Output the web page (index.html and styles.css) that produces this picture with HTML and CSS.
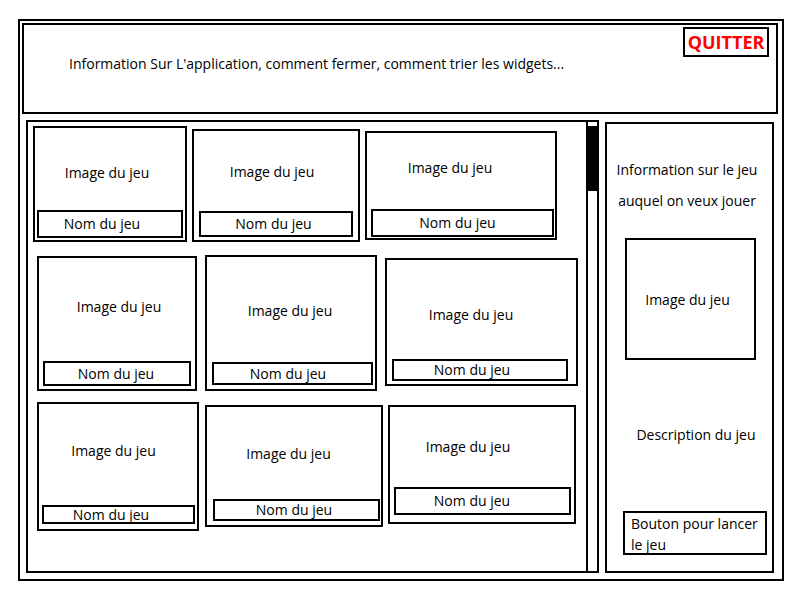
FILE: index.html
```html
<!DOCTYPE html>
<html lang="fr">
<head>
<meta charset="utf-8">
<title>Maquette</title>
<link rel="stylesheet" href="styles.css">
</head>
<body>
<div class="frame">
  <header class="header">
    <p class="header-info">Information Sur L'application, comment fermer, comment trier les widgets...</p>
    <button class="quit">QUITTER</button>
  </header>
  <div class="main">
    <section class="games">
      <div class="row">
        <div class="card c1"><div class="card-img"><span>Image du jeu</span></div><div class="card-name"><span>Nom du jeu</span></div></div>
        <div class="card c2"><div class="card-img"><span>Image du jeu</span></div><div class="card-name"><span>Nom du jeu</span></div></div>
        <div class="card c3"><div class="card-img"><span>Image du jeu</span></div><div class="card-name"><span>Nom du jeu</span></div></div>
      </div>
      <div class="row">
        <div class="card c4"><div class="card-img"><span>Image du jeu</span></div><div class="card-name"><span>Nom du jeu</span></div></div>
        <div class="card c5"><div class="card-img"><span>Image du jeu</span></div><div class="card-name"><span>Nom du jeu</span></div></div>
        <div class="card c6"><div class="card-img"><span>Image du jeu</span></div><div class="card-name"><span>Nom du jeu</span></div></div>
      </div>
      <div class="row">
        <div class="card c7"><div class="card-img"><span>Image du jeu</span></div><div class="card-name"><span>Nom du jeu</span></div></div>
        <div class="card c8"><div class="card-img"><span>Image du jeu</span></div><div class="card-name"><span>Nom du jeu</span></div></div>
        <div class="card c9"><div class="card-img"><span>Image du jeu</span></div><div class="card-name"><span>Nom du jeu</span></div></div>
      </div>
    </section>
    <div class="scrollbar"><div class="thumb"></div></div>
    <aside class="details">
      <p class="details-info">Information sur le jeu<br>auquel on veux jouer</p>
      <div class="details-img">Image du jeu</div>
      <p class="details-desc">Description du jeu</p>
      <button class="launch">Bouton pour lancer<br>le jeu</button>
    </aside>
  </div>
</div>
</body>
</html>
```

FILE: styles.css
```css
* { box-sizing: border-box; }

html, body {
  margin: 0;
  padding: 0;
  background: #fff;
}

body {
  font-family: "Open Sans", "Noto Sans", sans-serif;
  font-size: 14px;
  color: #000;
  width: 800px;
  height: 600px;
  padding: 19px 0 0 18px;
}

.frame {
  width: 766px;
  height: 562px;
  border: 2px solid #000;
  padding: 2px 6px 6px 2px;
  display: flex;
  flex-direction: column;
}

.header {
  width: 756px;
  height: 91px;
  border: 2px solid #000;
  display: flex;
  align-items: flex-start;
  justify-content: space-between;
}

.header-info {
  margin: 29px 0 0 45px;
  line-height: 20px;
}

.quit {
  margin: 2px 7px 0 0;
  width: 86px;
  height: 30px;
  border: 2px solid #000;
  background: #fff;
  color: #ff0000;
  font-family: "Open Sans", sans-serif;
  font-weight: bold;
  font-size: 18px;
  line-height: 24px;
  padding: 0;
}

.main {
  display: flex;
  align-items: flex-start;
  margin: 6px 0 0 4px;
}

.games {
  width: 562px;
  height: 453px;
  border: 2px solid #000;
}

.row {
  display: flex;
  align-items: flex-start;
}

.card {
  width: var(--w);
  height: var(--h);
  margin: var(--mt) 0 0 var(--ml);
  border: 2px solid #000;
  display: flex;
  flex-direction: column;
}

.card-img {
  flex: 1;
  display: flex;
  align-items: center;
  justify-content: center;
  line-height: 18px;
}

.card-img span {
  margin: var(--iy) 0 0 var(--ix);
}

.card-name {
  height: var(--nh);
  margin: 0 var(--nr) var(--nb) var(--nl);
  border: 2px solid #000;
  display: flex;
  align-items: center;
  justify-content: center;
  line-height: 18px;
}

.card-name span {
  margin-left: var(--nx);
}

.c1 { --w: 154px; --h: 116px; --mt: 4px;  --ml: 5px; --ix: -6px;  --iy: 8px;  --nh: 28px; --nl: 2px; --nr: 2px; --nb: 2px; --nx: -16px; }
.c2 { --w: 168px; --h: 113px; --mt: 7px;  --ml: 5px; --ix: -8px;  --iy: 2px;  --nh: 26px; --nl: 5px; --nr: 5px; --nb: 3px; --nx: -5px; }
.c3 { --w: 192px; --h: 109px; --mt: 9px;  --ml: 5px; --ix: -22px; --iy: -6px; --nh: 28px; --nl: 4px; --nr: 1px; --nb: 1px; --nx: -10px; }
.c4 { --w: 160px; --h: 135px; --mt: 14px; --ml: 9px; --ix: 4px;   --iy: -5px; --nh: 25px; --nl: 4px; --nr: 4px; --nb: 3px; --nx: -2px; }
.c5 { --w: 172px; --h: 136px; --mt: 13px; --ml: 8px; --ix: -2px;  --iy: 3px;  --nh: 23px; --nl: 5px; --nr: 2px; --nb: 4px; --nx: -9px; }
.c6 { --w: 193px; --h: 128px; --mt: 16px; --ml: 8px; --ix: -21px; --iy: 11px; --nh: 22px; --nl: 5px; --nr: 8px; --nb: 3px; --nx: -16px; }
.c7 { --w: 162px; --h: 129px; --mt: 11px; --ml: 9px; --ix: -9px;  --iy: -7px; --nh: 19px; --nl: 3px; --nr: 2px; --nb: 5px; --nx: -15px; }
.c8 { --w: 178px; --h: 122px; --mt: 14px; --ml: 6px; --ix: -11px; --iy: 2px;  --nh: 22px; --nl: 6px; --nr: 1px; --nb: 4px; --nx: -5px; }
.c9 { --w: 188px; --h: 119px; --mt: 14px; --ml: 5px; --ix: -28px; --iy: 0px;  --nh: 28px; --nl: 4px; --nr: 3px; --nb: 7px; --nx: -21px; }

.scrollbar {
  width: 13px;
  height: 453px;
  margin-left: -2px;
  border: 2px solid #000;
  padding-top: 4px;
}

.thumb {
  height: 65px;
  background: #000;
}

.details {
  width: 169px;
  height: 451px;
  margin: 2px 0 0 6px;
  border: 2px solid #000;
  display: flex;
  flex-direction: column;
  align-items: flex-start;
}

.details-info {
  margin: 30px 0 0 0;
  width: 100%;
  padding-right: 5px;
  text-align: center;
  line-height: 31px;
}

.details-img {
  margin: 22px 0 0 18px;
  width: 131px;
  height: 122px;
  border: 2px solid #000;
  display: flex;
  align-items: center;
  justify-content: center;
  padding-right: 6px;
}

.details-desc {
  margin: 65px 0 0 0;
  width: 100%;
  padding-left: 13px;
  text-align: center;
  line-height: 20px;
}

.launch {
  margin: 66px 0 0 16px;
  width: 144px;
  height: 44px;
  border: 2px solid #000;
  background: #fff;
  color: #000;
  font-family: "Open Sans", sans-serif;
  font-size: 14px;
  line-height: 21px;
  text-align: left;
  padding: 0 0 0 6px;
}
```
